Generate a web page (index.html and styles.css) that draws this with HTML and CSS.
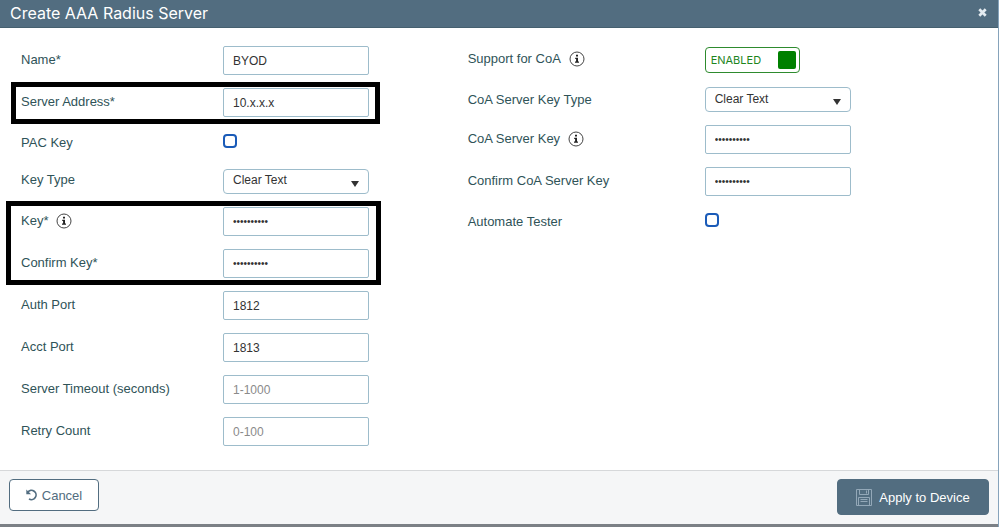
FILE: index.html
```
<!DOCTYPE html>
<html lang="en">
<head>
<meta charset="UTF-8">
<title>Create AAA Radius Server</title>
<link rel="stylesheet" href="styles.css">
</head>
<body>
<svg width="0" height="0" class="defs">
<symbol id="info" viewBox="0 0 16 16">
<circle cx="8" cy="8" r="7" fill="none" stroke="#444" stroke-width="1"/>
<path d="M7 3.8h2v1.8H7zM6.2 6.8H9v3.800h1v1.200H6v-1.200h1.100V8h-.9z" fill="#222"/>
</symbol>
</svg>

<header class="titlebar">
<h1>Create AAA Radius Server</h1>
<button type="button" class="close" aria-label="Close">
<svg width="9" height="9" viewBox="0 0 9 9"><path d="M1.3 1.3l6.4 6.4M7.7 1.3L1.3 7.7" stroke="#e4ebf0" stroke-width="2.7"/></svg>
</button>
</header>

<form class="dialog" id="radius">
<div class="column">
<div class="row">
<label for="name">Name*</label>
<input type="text" id="name" value="BYOD">
</div>
<div class="marked marked-address">
<div class="row">
<label for="address">Server Address*</label>
<input type="text" id="address" value="10.x.x.x">
</div>
</div>
<div class="row short">
<label for="pac">PAC Key</label>
<input type="checkbox" id="pac">
</div>
<div class="row">
<label for="keytype">Key Type</label>
<div class="select">
<select id="keytype"><option>Clear Text</option></select>
</div>
</div>
<div class="marked marked-keys">
<div class="row">
<label for="key">Key* <svg class="info"><use href="#info"/></svg></label>
<input type="password" id="key" value="abcdefghij">
</div>
<div class="row">
<label for="confirm">Confirm Key*</label>
<input type="password" id="confirm" value="abcdefghij">
</div>
</div>
<div class="row">
<label for="auth">Auth Port</label>
<input type="text" id="auth" value="1812">
</div>
<div class="row">
<label for="acct">Acct Port</label>
<input type="text" id="acct" value="1813">
</div>
<div class="row">
<label for="timeout">Server Timeout (seconds)</label>
<input type="text" id="timeout" placeholder="1-1000">
</div>
<div class="row">
<label for="retry">Retry Count</label>
<input type="text" id="retry" placeholder="0-100">
</div>
</div>

<div class="column wide">
<div class="row">
<label for="coa">Support for CoA <svg class="info"><use href="#info"/></svg></label>
<button type="button" id="coa" class="toggle" aria-pressed="true">ENABLED <span class="knob"></span></button>
</div>
<div class="row short">
<label for="coatype">CoA Server Key Type</label>
<div class="select">
<select id="coatype"><option>Clear Text</option></select>
</div>
</div>
<div class="row">
<label for="coakey">CoA Server Key <svg class="info"><use href="#info"/></svg></label>
<input type="password" id="coakey" value="abcdefghij">
</div>
<div class="row">
<label for="coaconfirm">Confirm CoA Server Key</label>
<input type="password" id="coaconfirm" value="abcdefghij">
</div>
<div class="row short">
<label for="tester">Automate Tester</label>
<input type="checkbox" id="tester">
</div>
</div>
</form>

<footer>
<button type="button" class="btn cancel">
<svg width="12" height="12" viewBox="0 0 12 12"><path d="M1.800 3.200A4.600 4.600 0 1 1 3 9.900" fill="none" stroke="#526d80" stroke-width="1.700"/><path d="M.3.500v4.800h4.800z" fill="#526d80"/></svg>
Cancel
</button>
<button type="submit" form="radius" class="btn apply">
<svg width="16" height="17" viewBox="0 0 16 17" fill="none" stroke="#93a8b8" stroke-width="1"><path d="M.5.5h15v16H.5zM3.500.5v5h9v-5M10.500 1.500v3M2.500 16V8.500h11V16M4.500 10.500h7M4.500 12.500h7"/></svg>
Apply to Device
</button>
</footer>
</body>
</html>
```
FILE: styles.css
```
*, *::after {
box-sizing: border-box;
}

body {
margin: 0;
min-height: 100vh;
display: flex;
flex-direction: column;
font-family: "Liberation Sans", Arial, sans-serif;
font-size: 13px;
color: #2f5358;
background-color: #fff;
border-right: 1px solid #86a3bb;
}

input, select, button {
font-family: inherit;
margin: 0;
}

.defs {
position: absolute;
}

.titlebar {
display: flex;
align-items: center;
justify-content: space-between;
height: 28px;
padding: 0 11px 2px 10px;
background-color: #526d80;
border-bottom: 1px solid #45606f;
}
.titlebar h1 {
margin: 0;
font-family: Inter, "Liberation Sans", sans-serif;
font-size: 16px;
font-weight: 400;
line-height: 24px;
color: #fff;
}

.close {
display: flex;
padding: 0;
border: none;
background: none;
cursor: pointer;
}

.dialog {
flex: 1;
display: grid;
grid-template-columns: 16fr 19fr;
align-items: start;
padding: 18px 0 23px 21px;
}

.column, .marked {
display: flex;
flex-direction: column;
gap: 13px;
}

.row {
display: grid;
grid-template-columns: 202px 146px;
align-items: center;
min-height: 26px;
}
.wide .row {
grid-template-columns: 237px 146px;
min-height: 28px;
}
.row.short, .wide .row.short {
min-height: 25px;
}

label {
display: flex;
align-items: center;
gap: 8px;
line-height: 18px;
padding-bottom: 2px;
}
.short label {
padding-bottom: 0;
}

.info {
width: 16px;
height: 16px;
}

input[type="text"],
input[type="password"] {
width: 100%;
height: 29px;
padding: 0 9px;
border: 1px solid #9dbccb;
border-radius: 2px;
background-color: #fff;
font-size: 12px;
color: #333;
}
input[type="password"] {
font-size: 10px;
}
input::placeholder {
color: #8a8a8a;
}

input[type="checkbox"] {
appearance: none;
width: 14px;
height: 14px;
margin-bottom: 4px;
border: 2px solid #1a5bb8;
border-radius: 4px;
background-color: #fff;
}

.select {
position: relative;
}
.select select {
display: block;
appearance: none;
width: 100%;
height: 25px;
padding: 0 9px 2px;
border: 1px solid #9dbccb;
border-radius: 4px;
background-color: #fff;
font-size: 12px;
color: #333;
}
.select::after {
content: "";
position: absolute;
right: 10px;
bottom: 7px;
border-left: 4px solid transparent;
border-right: 4px solid transparent;
border-top: 6px solid #333;
pointer-events: none;
}

.marked {
position: relative;
}
.marked::after {
content: "";
position: absolute;
top: -6px;
bottom: -7px;
left: -15px;
width: 375px;
border: 5px solid #000;
pointer-events: none;
}
.marked-address::after {
left: -10px;
width: 369px;
}

.toggle {
display: flex;
align-items: center;
justify-content: space-between;
width: 95px;
height: 26px;
padding: 0 3px 0 5px;
border: 1px solid #2e8b2e;
border-radius: 4px;
background-color: #fff;
font-family: Inter, "Liberation Sans", sans-serif;
font-size: 11px;
color: #1d851d;
}
.knob {
width: 18px;
height: 18px;
border-radius: 2px;
background-color: #008000;
}

footer {
display: flex;
align-items: flex-start;
justify-content: space-between;
height: 57px;
padding: 8px 9px;
background-color: #f5f6f7;
border-top: 1px solid #d6d8da;
border-bottom: 3px solid #7b8085;
}

.btn {
display: flex;
align-items: center;
justify-content: center;
border: 1px solid #526d80;
border-radius: 4px;
font-size: 13px;
cursor: pointer;
}
.cancel {
gap: 4px;
width: 90px;
height: 32px;
background-color: #fff;
color: #526d80;
}
.apply {
gap: 7px;
width: 152px;
height: 36px;
background-color: #526d80;
color: #fff;
}
```
